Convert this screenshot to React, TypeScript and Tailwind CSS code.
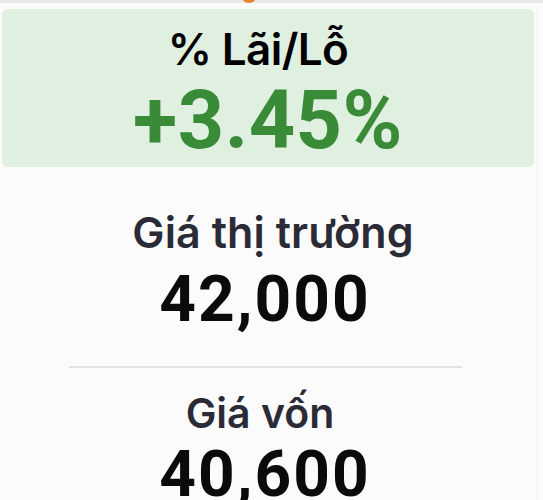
import React from "react";

const font = { fontFamily: "Inter, 'Noto Sans', sans-serif" };
const digits = { fontFamily: "Roboto, Inter, sans-serif" };

function Stat({ label, value, gap, size, shift }: { label: string; value: string; gap: string; size: string; shift: string }) {
    return (
        <div className="flex flex-col items-center">
            <div className={`${size} ${shift} leading-none font-semibold text-[#2a2b37]`}>{label}</div>
            <div className={`${gap} text-[64px] leading-none font-bold text-[#0b0b0b] tracking-[2px]`} style={digits}>
                {value}
            </div>
        </div>
    );
}

export default function App() {
    return (
        <div className="w-[543px] h-[500px] overflow-hidden bg-[#fbfbfb]" style={font}>
            {/* top bar with the edge of the avatar peeking in */}
            <div className="h-[3px] bg-[#e9e9e9] overflow-hidden flex">
                <div className="ml-[241px] -mt-[13px] w-4 h-4 rounded-full bg-[#e8852f]" />
            </div>

            <div className="w-[538px] border-r border-[#eeeeee]">
                {/* P/L card */}
                <div className="ml-[2px] mt-[6px] w-[532px] rounded-[6px] bg-[#dfefe0] pt-[18px] pb-[6px] flex flex-col items-center">
                    <div className="text-[44px] leading-none font-semibold text-black -ml-5 tracking-[-0.6px]">% Lãi/Lỗ</div>
                    <div className="mt-[9px] text-[81px] leading-none font-bold text-[#3a8b38] tracking-[0.5px]" style={digits}>
                        +3.45%
                    </div>
                </div>

                <div className="w-[530px] flex flex-col items-center">
                    <div className="mt-[44px]">
                        <Stat label="Giá thị trường" value="42,000" gap="mt-[14px]" size="text-[43px]" shift="ml-[16px] tracking-[0.1px]" />
                    </div>
                    <div className="mt-[34px] w-[393px] h-[2px] bg-[#e2e2e2]" />
                    <div className="mt-[25px]">
                        <Stat label="Giá vốn" value="40,600" gap="mt-[9px]" size="text-[41px]" shift="mr-[10px]" />
                    </div>
                </div>
            </div>
        </div>
    );
}
